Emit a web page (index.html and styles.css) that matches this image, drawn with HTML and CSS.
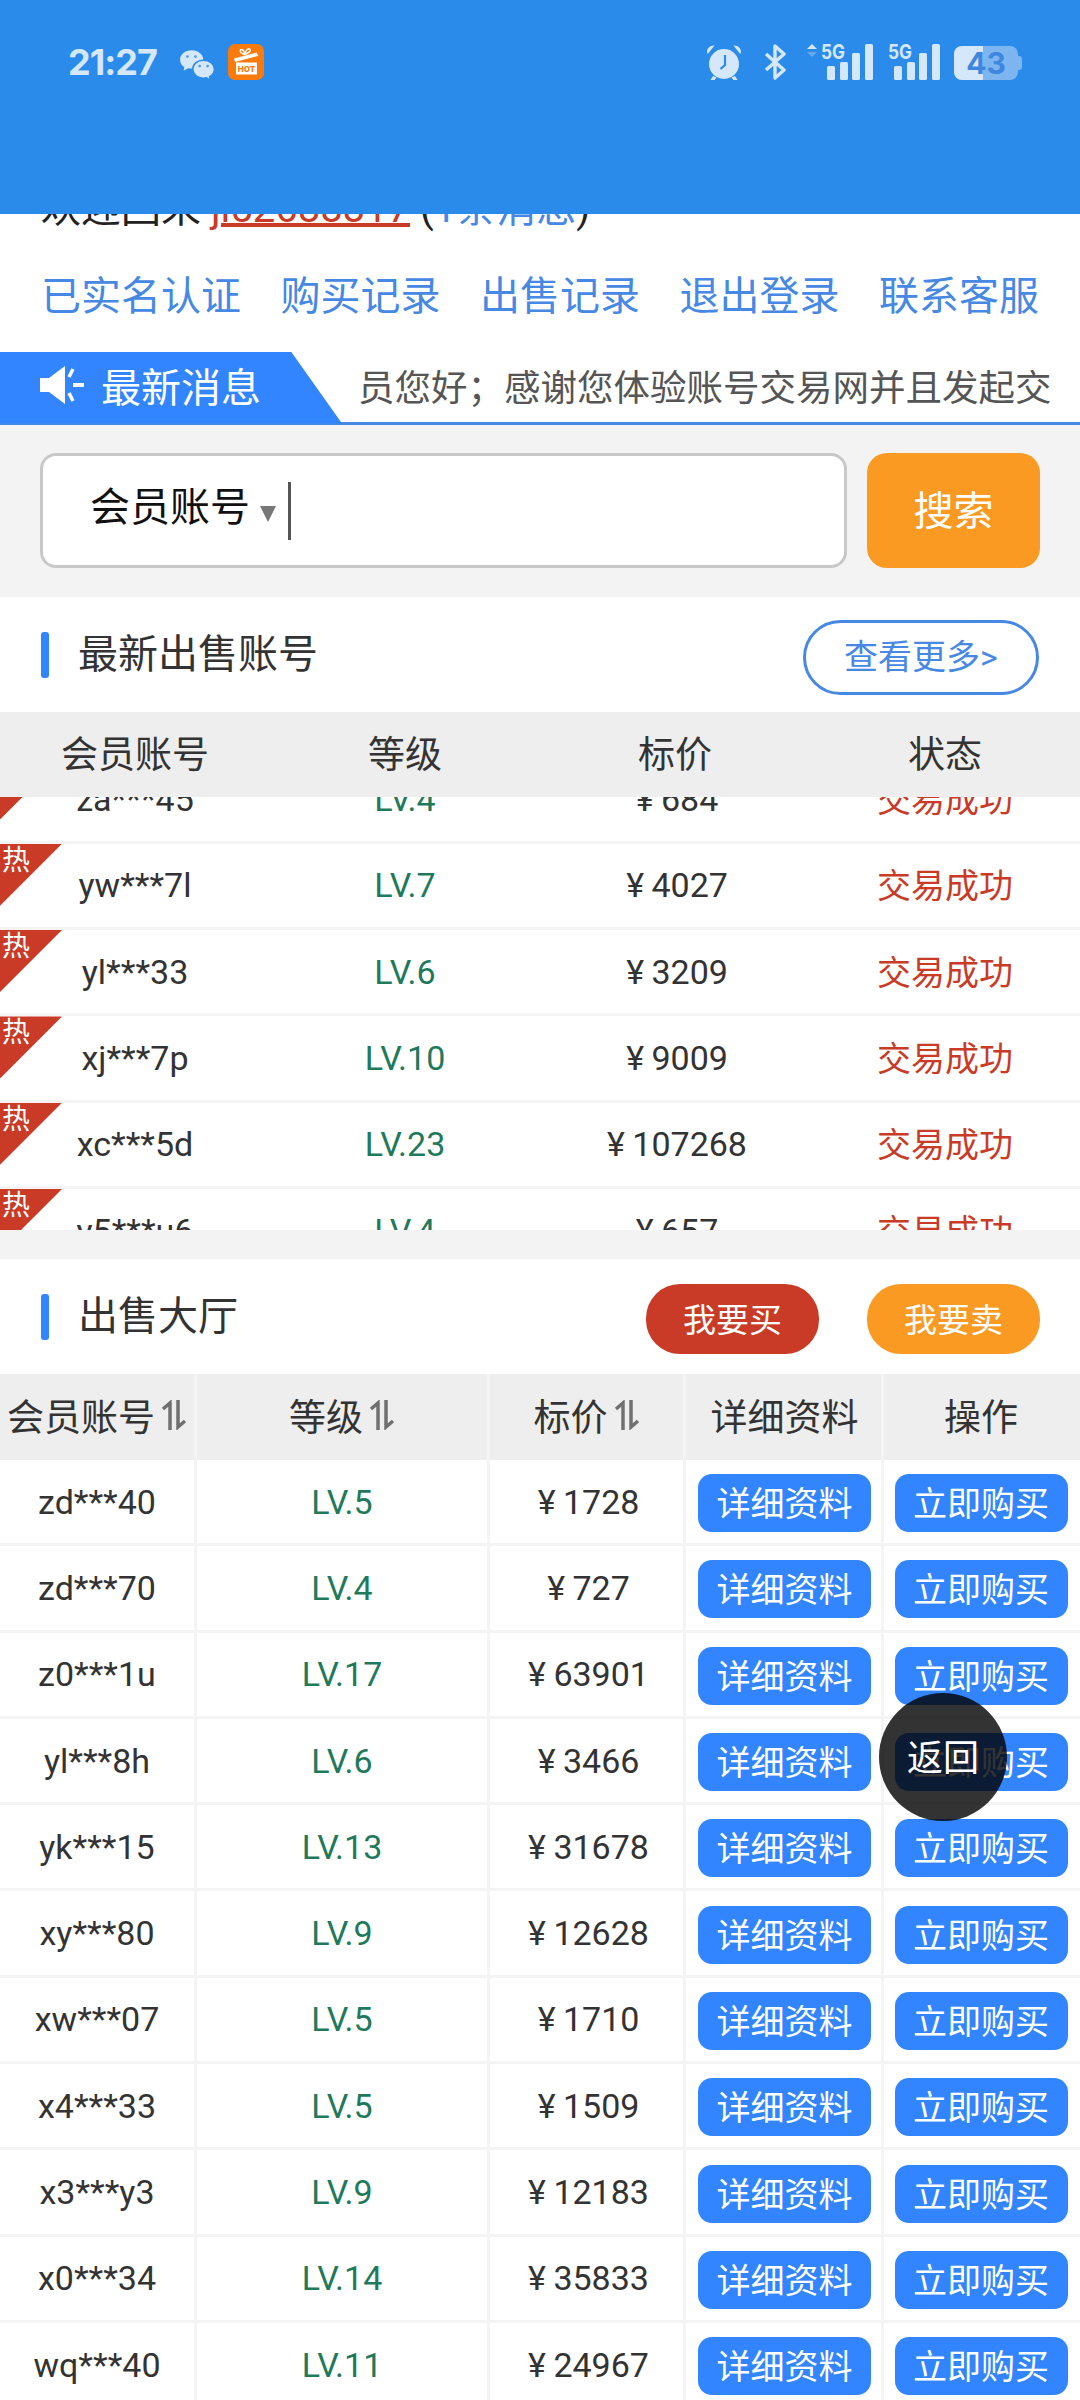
FILE: index.html
```html
<!DOCTYPE html>
<html lang="zh-CN">
<head>
    <meta charset="UTF-8">
    <meta name="viewport" content="width=device-width, initial-scale=1.0">
    <title>账号交易网</title>
    <link rel="stylesheet" href="styles.css">
</head>
<body>
<div class="page">
    <header class="top-bar">
        <div class="status-left">
            <span class="clock">21:27</span>
            <svg class="ico-wechat" width="36" height="32" viewBox="0 0 34 30">
                <path d="M12 1C5.600 1 1 5 1 10c0 3 1.600 5.400 4 7l-.6 3.400L8.600 18c1.100.3 2.200.4 3.400.4C18 18.400 23 14.600 23 10S18.400 1 12 1z" fill="#d5e7fb"/>
                <path d="M23 10.500c-5.800 0-10 3.800-10 8.500s4.200 8.500 10 8.500c1 0 2-.1 2.900-.4l3.600 2.400-.6-3.500c2.800-1.500 4.600-4 4.600-7 0-4.700-4.500-8.500-10.500-8.500z" fill="#d5e7fb" stroke="#2b8bea" stroke-width="1.500"/>
                <circle cx="8" cy="7" r="1.300" fill="#5b9ee8"/>
                <circle cx="15.500" cy="7" r="1.300" fill="#5b9ee8"/>
                <circle cx="19.500" cy="16" r="1.300" fill="#5b9ee8"/>
                <circle cx="27" cy="16" r="1.300" fill="#5b9ee8"/>
            </svg>
            <svg class="ico-gift" width="36" height="36" viewBox="0 0 36 36">
                <rect width="36" height="36" rx="7" fill="#fb7a0c"/>
                <path d="M6 14.500 29 8.500l1 3.500L7 18z" fill="#fff"/>
                <path d="M16.500 10.500c-3-1-5-3-4-4.500s3.500 0 4.500 4c1-4.500 3.500-6 5-4.500s-2 4-5.500 5z" fill="none" stroke="#fff" stroke-width="1.500"/>
                <rect x="8" y="18.500" width="21" height="12" fill="#fff"/>
                <text x="18.500" y="27.500" class="gift-text">HOT</text>
            </svg>
        </div>
        <div class="status-right">
            <svg class="ico-alarm" width="36" height="37" viewBox="0 0 36 37">
                <path d="M1 8C1 4 4.500 1 8.500 1.500L1.800 10zM35 8c0-4-3.500-7-7.500-6.500L34.200 10z" fill="#d5e7fb"/>
                <circle cx="18" cy="20" r="15" fill="#d5e7fb"/>
                <path d="M7 32l-2.500 4h4l2-2.500zM29 32l2.500 4h-4l-2-2.500z" fill="#d5e7fb"/>
                <path d="M19 11v10l-4.500 4" fill="none" stroke="#2b8bea" stroke-width="2.200"/>
            </svg>
            <svg class="ico-bt" width="23" height="36" viewBox="0 0 23 36">
                <path d="M2 10l18 16-9 8V2l9 8L2 26" fill="none" stroke="#d5e7fb" stroke-width="3.400" stroke-linejoin="round"/>
            </svg>
            <svg class="ico-signal" width="68" height="36" viewBox="0 0 68 36">
                <path d="M0 5 5 0l5 5z" fill="#d5e7fb"/>
                <path d="M0 8l5 5 5-5z" fill="#6aa8ec"/>
                <text x="14" y="15" class="net-text" textLength="24" lengthAdjust="spacingAndGlyphs">5G</text>
                <rect x="20" y="22" width="8" height="14" rx="1.500" fill="#d5e7fb"/>
                <rect x="33" y="18" width="8" height="18" rx="1.500" fill="#d5e7fb"/>
                <rect x="45" y="9" width="8" height="27" rx="1.500" fill="#d5e7fb"/>
                <rect x="58" y="0" width="8" height="36" rx="1.500" fill="#d5e7fb"/>
            </svg>
            <svg class="ico-signal-2" width="52" height="36" viewBox="0 0 52 36">
                <text x="0" y="15" class="net-text" textLength="24" lengthAdjust="spacingAndGlyphs">5G</text>
                <rect x="6" y="22" width="8" height="14" rx="1.500" fill="#d5e7fb"/>
                <rect x="19" y="18" width="8" height="18" rx="1.500" fill="#d5e7fb"/>
                <rect x="31" y="9" width="8" height="27" rx="1.500" fill="#d5e7fb"/>
                <rect x="44" y="0" width="8" height="36" rx="1.500" fill="#d5e7fb"/>
            </svg>
            <div class="battery">
                <div class="battery-body">
                    <span class="battery-fill"></span>
                    <span class="battery-num">43</span>
                </div>
            </div>
        </div>
    </header>

    <div class="welcome">欢迎回来 <a class="user-link">jl52688817</a> (<a class="msg-link">1条消息</a>)</div>

    <nav class="user-nav">
        <a>已实名认证</a>
        <a>购买记录</a>
        <a>出售记录</a>
        <a>退出登录</a>
        <a>联系客服</a>
    </nav>

    <div class="news-bar">
        <div class="news-tab">
            <svg class="ico-speaker" width="46" height="40" viewBox="0 0 46 40">
                <path d="M0 13h9L25 1v38L9 27H0z" fill="#fff"/>
                <path d="M33 4l-4 8M33 36l-4-8" stroke="#fff" stroke-width="3.500" fill="none"/>
                <path d="M33 20h11" stroke="#fff" stroke-width="4" fill="none"/>
            </svg>
            <span>最新消息</span>
        </div>
        <div class="news-text"><span>员您好；感谢您体验账号交易网并且发起交易</span></div>
    </div>

    <section class="search-wrap">
        <div class="search-box">
            <span class="search-type">会员账号</span>
            <span class="search-arrow"></span>
            <span class="search-caret"></span>
        </div>
        <button class="search-btn">搜索</button>
    </section>

    <section class="sec-head">
        <h2 class="sec-title">最新出售账号</h2>
        <a class="more-btn">查看更多&gt;</a>
    </section>

    <div class="latest-row latest-head">
        <span>会员账号</span><span>等级</span><span>标价</span><span>状态</span>
    </div>
    <div class="latest-list">
        <div class="latest-scroll">
            <div class="latest-row"><div class="hot"><b>热</b></div><span>za***45</span><span class="lv">LV.4</span><span class="price">¥ 684</span><span class="done">交易成功</span></div>
            <div class="latest-row"><div class="hot"><b>热</b></div><span>yw***7l</span><span class="lv">LV.7</span><span class="price">¥ 4027</span><span class="done">交易成功</span></div>
            <div class="latest-row"><div class="hot"><b>热</b></div><span>yl***33</span><span class="lv">LV.6</span><span class="price">¥ 3209</span><span class="done">交易成功</span></div>
            <div class="latest-row"><div class="hot"><b>热</b></div><span>xj***7p</span><span class="lv">LV.10</span><span class="price">¥ 9009</span><span class="done">交易成功</span></div>
            <div class="latest-row"><div class="hot"><b>热</b></div><span>xc***5d</span><span class="lv">LV.23</span><span class="price">¥ 107268</span><span class="done">交易成功</span></div>
            <div class="latest-row"><div class="hot"><b>热</b></div><span>y5***u6</span><span class="lv">LV.4</span><span class="price">¥ 657</span><span class="done">交易成功</span></div>
        </div>
    </div>

    <div class="sec-gap"></div>

    <section class="sec-head hall-head">
        <h2 class="sec-title">出售大厅</h2>
        <div class="hall-btns">
            <a class="pill pill-red">我要买</a>
            <a class="pill pill-orange">我要卖</a>
        </div>
    </section>

    <div class="hall-table">
        <div class="hall-row hall-title">
            <div>会员账号<svg class="sort" width="26" height="30" viewBox="0 0 26 30"><path d="M9 30V3L2 9M17 0v27l7-6" fill="none" stroke="#707070" stroke-width="3.500"/></svg></div>
            <div>等级<svg class="sort" width="26" height="30" viewBox="0 0 26 30"><path d="M9 30V3L2 9M17 0v27l7-6" fill="none" stroke="#707070" stroke-width="3.500"/></svg></div>
            <div>标价<svg class="sort" width="26" height="30" viewBox="0 0 26 30"><path d="M9 30V3L2 9M17 0v27l7-6" fill="none" stroke="#707070" stroke-width="3.500"/></svg></div>
            <div>详细资料</div>
            <div>操作</div>
        </div>
        <div class="hall-row"><div>zd***40</div><div class="lv">LV.5</div><div class="price">¥ 1728</div><div><a class="blue-btn">详细资料</a></div><div><a class="blue-btn">立即购买</a></div></div>
        <div class="hall-row"><div>zd***70</div><div class="lv">LV.4</div><div class="price">¥ 727</div><div><a class="blue-btn">详细资料</a></div><div><a class="blue-btn">立即购买</a></div></div>
        <div class="hall-row"><div>z0***1u</div><div class="lv">LV.17</div><div class="price">¥ 63901</div><div><a class="blue-btn">详细资料</a></div><div><a class="blue-btn">立即购买</a></div></div>
        <div class="hall-row"><div>yl***8h</div><div class="lv">LV.6</div><div class="price">¥ 3466</div><div><a class="blue-btn">详细资料</a></div><div><a class="blue-btn">立即购买</a></div></div>
        <div class="hall-row"><div>yk***15</div><div class="lv">LV.13</div><div class="price">¥ 31678</div><div><a class="blue-btn">详细资料</a></div><div><a class="blue-btn">立即购买</a></div></div>
        <div class="hall-row"><div>xy***80</div><div class="lv">LV.9</div><div class="price">¥ 12628</div><div><a class="blue-btn">详细资料</a></div><div><a class="blue-btn">立即购买</a></div></div>
        <div class="hall-row"><div>xw***07</div><div class="lv">LV.5</div><div class="price">¥ 1710</div><div><a class="blue-btn">详细资料</a></div><div><a class="blue-btn">立即购买</a></div></div>
        <div class="hall-row"><div>x4***33</div><div class="lv">LV.5</div><div class="price">¥ 1509</div><div><a class="blue-btn">详细资料</a></div><div><a class="blue-btn">立即购买</a></div></div>
        <div class="hall-row"><div>x3***y3</div><div class="lv">LV.9</div><div class="price">¥ 12183</div><div><a class="blue-btn">详细资料</a></div><div><a class="blue-btn">立即购买</a></div></div>
        <div class="hall-row"><div>x0***34</div><div class="lv">LV.14</div><div class="price">¥ 35833</div><div><a class="blue-btn">详细资料</a></div><div><a class="blue-btn">立即购买</a></div></div>
        <div class="hall-row"><div>wq***40</div><div class="lv">LV.11</div><div class="price">¥ 24967</div><div><a class="blue-btn">详细资料</a></div><div><a class="blue-btn">立即购买</a></div></div>
    </div>

    <a class="back-float">返回</a>
</div>
</body>
</html>
```

FILE: styles.css
```css
:root {
    --blue: #3385ff;
    --link: #4688e4;
    --red: #c93a27;
    --orange: #fb9a22;
    --green: #1f7a5c;
    --line: #f4f4f4;
    --head: #eeeeee;
    --icon: #d5e7fb;
}

* {
    box-sizing: border-box;
}

body {
    margin: 0;
    background: #fff;
    font-family: Roboto, "Noto Sans CJK SC", sans-serif;
    color: #333;
}

a {
    text-decoration: none;
}

.page {
    position: relative;
    width: 1080px;
    height: 2400px;
    overflow: hidden;
}

.top-bar {
    position: absolute;
    top: 0;
    left: 0;
    z-index: 5;
    width: 100%;
    height: 214px;
    padding: 44px 58px 0 68px;
    display: flex;
    justify-content: space-between;
    align-items: flex-start;
    background: #2b8bea;
}

.status-left,
.status-right {
    display: flex;
    align-items: flex-start;
}

.clock {
    font-family: Inter, sans-serif;
    font-size: 36px;
    font-weight: 700;
    line-height: 36px;
    letter-spacing: -1px;
    color: var(--icon);
}

.ico-wechat {
    margin: 5px 0 0 22px;
}

.ico-gift {
    margin-left: 13px;
}

.gift-text {
    font-family: Inter, sans-serif;
    font-size: 8px;
    font-weight: 800;
    fill: #fb7a0c;
    text-anchor: middle;
}

.net-text {
    font-family: Inter, sans-serif;
    font-size: 20px;
    font-weight: 700;
    fill: var(--icon);
}

.ico-bt {
    margin-left: 22px;
}

.ico-signal {
    margin-left: 20px;
}

.ico-signal-2 {
    margin-left: 13px;
}

.battery {
    position: relative;
    width: 68px;
    height: 34px;
    margin: 2px 0 0 14px;
    padding-right: 4px;
}

.battery::after {
    content: "";
    position: absolute;
    right: 0;
    top: 10px;
    width: 4px;
    height: 14px;
    border-radius: 0 3px 3px 0;
    background: #7db5f0;
}

.battery-body {
    position: relative;
    height: 100%;
    border-radius: 8px;
    overflow: hidden;
    background: #7db5f0;
    text-align: center;
}

.battery-fill {
    position: absolute;
    left: 0;
    top: 0;
    width: 29px;
    height: 100%;
    background: var(--icon);
}

.battery-num {
    position: relative;
    font-family: Inter, sans-serif;
    font-size: 30px;
    font-weight: 700;
    line-height: 34px;
    color: #3f86e0;
}

.welcome {
    height: 46px;
    margin-top: 186px;
    padding-left: 41px;
    font-size: 40px;
    line-height: 46px;
    color: #222;
    white-space: nowrap;
}

.user-link {
    color: var(--red);
    text-decoration: underline 4px;
    text-underline-offset: 1px;
}

.msg-link {
    color: var(--link);
}

.user-nav {
    height: 121px;
    padding: 0 41px;
    display: flex;
    justify-content: space-between;
    align-items: center;
    font-size: 40px;
}

.user-nav a {
    color: var(--link);
}

.news-bar {
    height: 72px;
    display: flex;
    align-items: center;
    border-bottom: 3px solid var(--link);
}

.news-tab {
    width: 342px;
    height: 72px;
    flex: none;
    padding: 0 0 6px 40px;
    display: flex;
    align-items: center;
    gap: 15px;
    background: var(--blue);
    clip-path: polygon(0 0, 291px 0, 100% 100%, 0 100%);
    font-size: 40px;
    color: #fff;
}

.news-text {
    width: 692px;
    margin-left: 16px;
    padding-bottom: 4px;
    overflow: hidden;
    white-space: nowrap;
    font-size: 36.500px;
    color: #555;
}

.search-wrap {
    height: 172px;
    padding: 28px 40px 0 40px;
    display: flex;
    justify-content: space-between;
    background: #f3f3f3;
}

.search-box {
    width: 807px;
    height: 115px;
    padding-left: 47px;
    display: flex;
    align-items: center;
    background: #fff;
    border: 3px solid #c8c8c8;
    border-radius: 16px;
}

.search-type {
    font-size: 40px;
    color: #111;
    margin-top: -14px;
}

.search-arrow {
    width: 0;
    height: 0;
    margin: 6px 0 0 10px;
    border-left: 8px solid transparent;
    border-right: 8px solid transparent;
    border-top: 16px solid #777;
}

.search-caret {
    width: 3px;
    height: 58px;
    margin-left: 12px;
    background: #555;
}

.search-btn {
    width: 173px;
    height: 115px;
    padding: 0 0 6px;
    border: none;
    border-radius: 20px;
    background: var(--orange);
    color: #fff;
    font-family: inherit;
    font-size: 40px;
}

.sec-head {
    height: 115px;
    padding: 0 41px;
    display: flex;
    justify-content: space-between;
    align-items: center;
}

.hall-head {
    padding-right: 40px;
}

.sec-title {
    margin: 0;
    padding-left: 37px;
    font-size: 40px;
    font-weight: 400;
    line-height: 46px;
    color: #333;
    position: relative;
}

.sec-title::before {
    content: "";
    position: absolute;
    left: 0;
    top: 0;
    width: 8px;
    height: 46px;
    border-radius: 3px;
    background: var(--blue);
}

.more-btn {
    width: 236px;
    height: 75px;
    margin-top: 5px;
    padding-bottom: 6px;
    display: flex;
    justify-content: center;
    align-items: center;
    border: 3px solid var(--link);
    border-radius: 38px;
    font-size: 34px;
    color: var(--link);
}

.latest-row {
    position: relative;
    height: 86.300px;
    display: grid;
    grid-template-columns: repeat(4, 270px);
    align-items: center;
    justify-items: center;
    border-bottom: 3px solid var(--line);
    font-size: 34px;
    color: #333;
}

.latest-head {
    height: 85px;
    padding-bottom: 6px;
    border: none;
    background: var(--head);
    font-size: 37px;
}

.latest-list {
    height: 433px;
    overflow: hidden;
}

.latest-scroll {
    margin-top: -39.500px;
}

.hot {
    position: absolute;
    left: 0;
    top: 0;
    width: 62px;
    height: 62px;
    background: var(--red);
    clip-path: polygon(0 0, 100% 0, 0 100%);
}

.hot b {
    display: block;
    padding: 2px 0 0 2px;
    font-size: 28px;
    font-weight: 400;
    line-height: 30px;
    color: #fff;
}

.lv {
    color: var(--green);
}

.done {
    color: var(--red);
    margin-bottom: 3px;
}

.price {
    word-spacing: -1px;
    margin-left: 4px;
}

.sec-gap {
    height: 29px;
    background: #f3f3f3;
}

.hall-btns {
    display: flex;
    gap: 48px;
}

.pill {
    width: 173px;
    height: 70px;
    margin-top: 4px;
    padding-bottom: 2px;
    display: flex;
    justify-content: center;
    align-items: center;
    border-radius: 34px;
    font-size: 33px;
    color: #fff;
}

.pill-red {
    background: var(--red);
}

.pill-orange {
    background: var(--orange);
}

.hall-row {
    height: 86.300px;
    display: grid;
    grid-template-columns: 197px 293px 196px 198px 196px;
    border-bottom: 3px solid var(--line);
    font-size: 34px;
}

.hall-row > div {
    display: flex;
    justify-content: center;
    align-items: center;
    border-right: 3px solid var(--line);
    white-space: nowrap;
}

.hall-row > div:nth-child(4) {
    padding-left: 2px;
}

.hall-row > div:last-child {
    padding-right: 2px;
    border-right: none;
}

.hall-row > .price {
    margin-left: 0;
    padding-left: 4px;
}

.hall-title {
    height: 86px;
    background: var(--head);
    border-bottom: none;
    font-size: 37px;
}

.hall-title > div {
    padding-bottom: 4px;
}

.sort {
    margin-left: 6px;
    flex: none;
}

.blue-btn {
    width: 173px;
    height: 58px;
    margin-top: 3px;
    padding-bottom: 3px;
    display: flex;
    justify-content: center;
    align-items: center;
    border-radius: 14px;
    background: var(--blue);
    font-size: 34px;
    color: #fff;
}

.back-float {
    position: absolute;
    left: 879px;
    top: 1693px;
    width: 128px;
    height: 128px;
    padding-bottom: 4px;
    display: flex;
    justify-content: center;
    align-items: center;
    border-radius: 50%;
    background: rgba(0, 0, 0, 0.8);
    font-size: 36px;
    color: #fff;
}
```
